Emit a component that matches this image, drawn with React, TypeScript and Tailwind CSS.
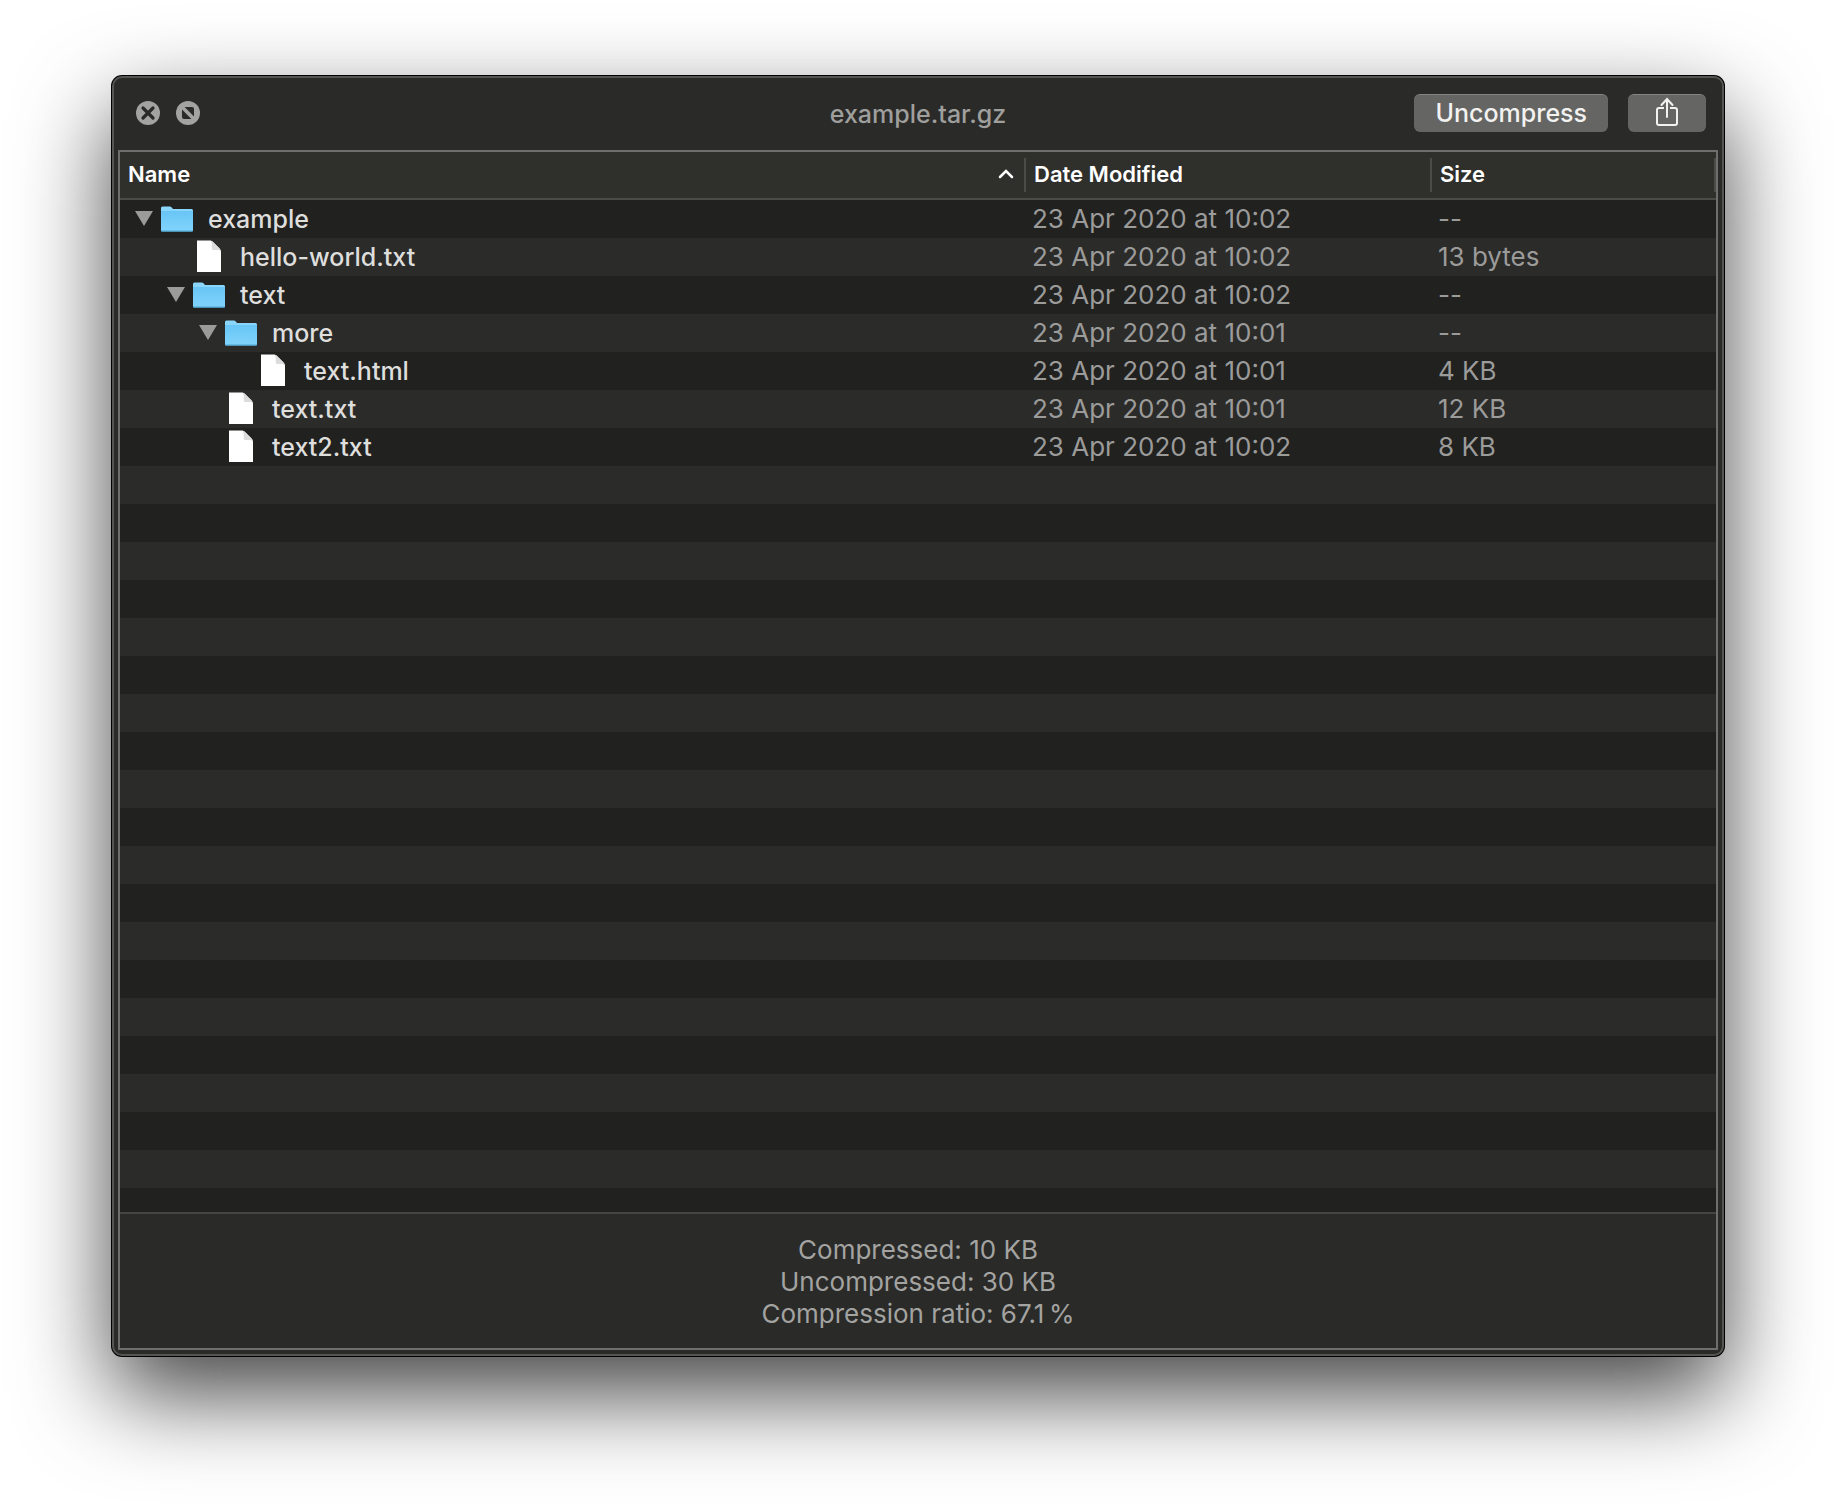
import clsx from 'clsx';
import React from 'react';

type Entry = {
  name: string;
  kind: 'folder' | 'file';
  depth: number;
  modified: string;
  size: string;
};

const ENTRIES: Entry[] = [
  { name: 'example', kind: 'folder', depth: 0, modified: '23 Apr 2020 at 10:02', size: '--' },
  { name: 'hello-world.txt', kind: 'file', depth: 1, modified: '23 Apr 2020 at 10:02', size: '13 bytes' },
  { name: 'text', kind: 'folder', depth: 1, modified: '23 Apr 2020 at 10:02', size: '--' },
  { name: 'more', kind: 'folder', depth: 2, modified: '23 Apr 2020 at 10:01', size: '--' },
  { name: 'text.html', kind: 'file', depth: 3, modified: '23 Apr 2020 at 10:01', size: '4 KB' },
  { name: 'text.txt', kind: 'file', depth: 2, modified: '23 Apr 2020 at 10:01', size: '12 KB' },
  { name: 'text2.txt', kind: 'file', depth: 2, modified: '23 Apr 2020 at 10:02', size: '8 KB' },
];

const INDENT = 32;
const EMPTY_ROWS = 20;

function CloseIcon() {
  return (
    <svg viewBox="0 0 24 24" className="size-6" aria-hidden="true">
      <circle cx="12" cy="12" r="12" fill="#a3a3a1" />
      <path d="M7 7l10 10M17 7L7 17" stroke="#2a2a28" strokeWidth="3.2" strokeLinecap="round" />
    </svg>
  );
}

function FullscreenIcon() {
  return (
    <svg viewBox="0 0 24 24" className="size-6" aria-hidden="true">
      <circle cx="12" cy="12" r="12" fill="#a3a3a1" />
      <path d="M8.6 6H16a2 2 0 0 1 2 2v7.4z" fill="#2a2a28" />
      <path d="M6 8.6V16a2 2 0 0 0 2 2h7.4z" fill="#2a2a28" />
    </svg>
  );
}

function ShareIcon() {
  return (
    <svg viewBox="0 0 24 30" className="h-[30px] w-6" fill="none" stroke="#f2f2f1" strokeWidth="2" aria-hidden="true">
      <path d="M9 11H4a2 2 0 0 0-2 2v13a2 2 0 0 0 2 2h16a2 2 0 0 0 2-2V13a2 2 0 0 0-2-2h-5" />
      <path d="M12 20V2M6.5 8L12 2l5.5 6" strokeLinecap="round" />
    </svg>
  );
}

function FolderIcon() {
  return (
    <svg viewBox="0 0 32 26" className="mr-[15px] h-[26px] w-8 shrink-0" aria-hidden="true">
      <defs>
        <linearGradient id="folder" x1="0" y1="0" x2="0" y2="1">
          <stop offset="0" stopColor="#68c5f5" />
          <stop offset="1" stopColor="#81d4fb" />
        </linearGradient>
      </defs>
      <path d="M0 2A1.5 1.5 0 0 1 1.5.5H9a2 2 0 0 1 1.5.7L12 3h18.5A1.5 1.5 0 0 1 32 4.5V24H0z" fill="#8ad6fb" />
      <path d="M0 5h32v19.5a1 1 0 0 1-1 1H1a1 1 0 0 1-1-1z" fill="url(#folder)" />
      <path d="M0 24.5h32a1 1 0 0 1-1 1H1a1 1 0 0 1-1-1z" fill="#4ba6d6" />
    </svg>
  );
}

function FileIcon() {
  return (
    <svg viewBox="0 0 32 32" className="mr-[15px] mb-0.5 size-8 shrink-0" aria-hidden="true">
      <path d="M4 .5h12.5c1.5 0 2.5.5 3.5 1.5l6.3 6.3c1 1 1.7 2.2 1.7 3.7v20H4z" fill="#fff" />
      <path d="M17.5.8c.8.8 1.2 2 1.2 3.5v4c0 1 .6 1.6 1.6 1.6h4c1.5 0 2.7.4 3.5 1.1-.2-1.1-.7-1.9-1.5-2.7L20 2c-.8-.8-1.6-1.1-2.5-1.2z" fill="#dcdcdc" />
    </svg>
  );
}

function NameCell({ entry }: { entry: Entry }) {
  return (
    <div className="flex h-[38px] items-center pl-[9px]" style={{ marginLeft: entry.depth * INDENT }}>
      {entry.kind === 'folder' ? (
        <button aria-label={`Collapse ${entry.name}`} className="flex w-8 justify-end pr-2 pb-0.5">
          <svg viewBox="0 0 18 15" className="h-[15px] w-[18px]" aria-hidden="true">
            <path d="M0 0h18L9 15z" fill="#9b9b99" />
          </svg>
        </button>
      ) : (
        <span className="w-8" />
      )}
      {entry.kind === 'folder' ? <FolderIcon /> : <FileIcon />}
      <span className="text-[25px] leading-9 font-medium text-[#dededd]">{entry.name}</span>
    </div>
  );
}

function Heading({ children, sorted }: { children: React.ReactNode; sorted?: boolean }) {
  return (
    <th
      className="h-12 border-b-2 border-[#4b4b48] p-0 text-left font-semibold"
      aria-sort={sorted ? 'ascending' : undefined}
    >
      <div className="flex h-[34px] items-center justify-between border-r-2 border-[#4b4b48] px-2 pb-0.5">
        {children}
        {sorted && (
          <svg viewBox="0 0 20 12" className="h-3 w-5" fill="none" aria-hidden="true">
            <path d="M4 9l6-6 6 6" stroke="#fff" strokeWidth="2.5" strokeLinecap="round" />
          </svg>
        )}
      </div>
    </th>
  );
}

function FileTable() {
  return (
    <table className="w-full table-fixed border-separate border-spacing-0">
      <colgroup>
        <col />
        <col className="w-[406px]" />
        <col className="w-[284px]" />
      </colgroup>
      <thead className="bg-[#2f2f2b] text-[22px] leading-8 text-white">
        <tr>
          <Heading sorted>Name</Heading>
          <Heading>Date Modified</Heading>
          <Heading>Size</Heading>
        </tr>
      </thead>
      <tbody className="text-[26px] leading-9 text-[#9b9b9a]">
        {ENTRIES.map((entry, i) => (
          <tr key={entry.name} className={clsx('h-[38px]', i % 2 ? 'bg-[#2b2b2a]' : 'bg-[#212120]')}>
            <td className="p-0">
              <NameCell entry={entry} />
            </td>
            <td className="py-0 pr-0 pl-[6px]">{entry.modified}</td>
            <td className="py-0 pr-0 pl-[6px]">{entry.size}</td>
          </tr>
        ))}
      </tbody>
    </table>
  );
}

export default function App() {
  return (
    <div className="flex min-h-screen flex-col bg-white px-28 pt-[76px] pb-[148px] font-['Inter','Liberation_Sans',sans-serif]">
      <main className="flex grow flex-col rounded-[10px] border-2 border-[#555553] bg-[#2a2a28] px-1 pb-1 shadow-[0_0_0_1px_#000,0_38px_92px_rgba(0,0,0,0.74)]">
        <header className="grid h-[72px] grid-cols-[1fr_auto_1fr] items-center px-3 pb-0.5">
          <div className="flex gap-4 pl-1.5">
            <button aria-label="Close">
              <CloseIcon />
            </button>
            <button aria-label="Full screen">
              <FullscreenIcon />
            </button>
          </div>
          <h1 className="pt-1 text-[25px] font-medium text-[#9f9f9d]">example.tar.gz</h1>
          <div className="flex justify-end gap-5">
            <button className="h-[38px] rounded-md border-t border-[#858584] bg-[#656564] px-[21px] pb-0.5 text-[25px] leading-8 font-medium text-[#f2f2f1]">
              Uncompress
            </button>
            <button
              aria-label="Share"
              className="flex h-[38px] w-[78px] justify-center rounded-md border-t border-[#858584] bg-[#656564] pt-0.5"
            >
              <ShareIcon />
            </button>
          </div>
        </header>

        <section className="flex grow flex-col border-2 border-[#6e6e6c]">
          <div className="flex grow flex-col bg-[#212120]">
            <FileTable />
            <div className="flex h-0 grow flex-col overflow-hidden">
              {Array.from({ length: EMPTY_ROWS }, (_, i) => (
                <div key={i} className={clsx('h-[38px] shrink-0', i % 2 ? 'bg-[#212120]' : 'bg-[#2b2b2a]')} />
              ))}
            </div>
          </div>
          <footer className="border-t-2 border-[#444442] pt-5 pb-[18px] text-center text-[26px] leading-8 text-[#a3a3a1]">
            <p>Compressed: 10 KB</p>
            <p>Uncompressed: 30 KB</p>
            <p>Compression ratio: 67.1{'\u2009'}%</p>
          </footer>
        </section>
      </main>
    </div>
  );
}
